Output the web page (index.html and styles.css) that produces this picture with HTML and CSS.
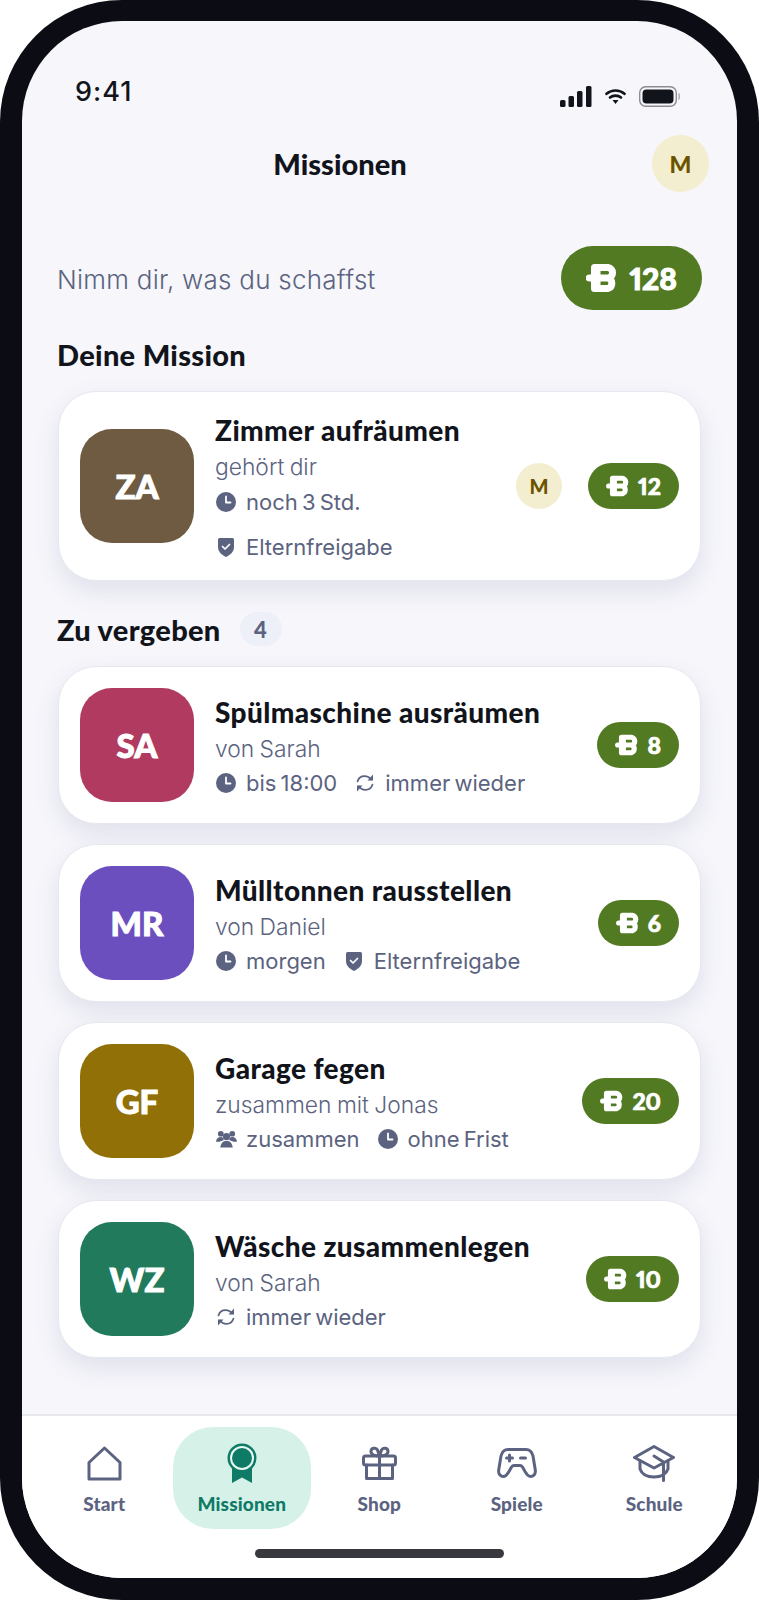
FILE: index.html
```html
<!DOCTYPE html>
<html lang="de">
<head>
    <meta charset="UTF-8">
    <meta name="viewport" content="width=device-width, initial-scale=1.0">
    <title>Missionen</title>
    <link rel="stylesheet" href="styles.css">
</head>
<body>
    <svg class="sprite" xmlns="http://www.w3.org/2000/svg">
        <symbol id="coin" viewBox="0 0 32 30">
            <path d="M8.500 4.500H22a5.300 5.300 0 0 1 0 10.500a5.500 5.500 0 0 1 0 10.500H8.500ZM3.200 15H20M11 4.500V25.500" fill="none" stroke="#fff" stroke-width="7" stroke-linecap="round" stroke-linejoin="round"/>
        </symbol>
        <symbol id="clock" viewBox="0 0 20 20">
            <circle cx="10" cy="10" r="10" fill="#5b6380"/>
            <path d="M10 4.500V10.500H14.500" fill="none" stroke="#fff" stroke-width="1.800" stroke-linecap="round" stroke-linejoin="round"/>
        </symbol>
        <symbol id="shield" viewBox="0 0 20 20">
            <path d="M2 2.500Q2 1 3.500 1H16.500Q18 1 18 2.500V10C18 15 14 18 10 20C6 18 2 15 2 10Z" fill="#5b6380"/>
            <path d="M6.500 9.500L9 12L13.500 7.500" fill="none" stroke="#fff" stroke-width="1.700" stroke-linecap="round" stroke-linejoin="round"/>
        </symbol>
        <symbol id="repeat" viewBox="0 0 20 20">
            <path d="M2.500 8.500C3.500 5 6.500 3.200 9.500 3.200C12 3.200 14.500 4.200 16 6.500M17.500 11.500C16.500 15 13.500 16.800 10.500 16.800C8 16.800 5.500 15.800 4 13.500" fill="none" stroke="#5b6380" stroke-width="1.700" stroke-linecap="round"/>
            <path d="M18 1.500V7.500H12.500ZM2 18.500V12.500H7.500Z" fill="#5b6380"/>
        </symbol>
        <symbol id="people" viewBox="0 0 22 20">
            <circle cx="11" cy="7.500" r="3.800" fill="#5b6380"/>
            <path d="M4.500 19C5 14 7.500 12 11 12S17 14 17.500 19Z" fill="#5b6380"/>
            <circle cx="5" cy="4.500" r="3" fill="#5b6380"/>
            <circle cx="17" cy="4.500" r="3" fill="#5b6380"/>
            <path d="M0 13C.5 9.500 2 8 5 8C6 8 6.800 8.200 7.400 8.600C7.600 9.800 8 10.500 8.500 11C6 11.600 4.800 12.200 4 13ZM22 13C21.500 9.500 20 8 17 8C16 8 15.200 8.200 14.600 8.600C14.400 9.800 14 10.500 13.500 11C16 11.600 17.200 12.200 18 13Z" fill="#5b6380"/>
        </symbol>
    </svg>

    <div class="phone">
        <div class="screen">
            <div class="status-bar">
                <span class="time">9:41</span>
                <div class="status-icons">
                    <svg width="32" height="21" viewBox="0 0 32 21"><g fill="#12141c"><rect x="0" y="14" width="5.500" height="7" rx="1.500"/><rect x="8.500" y="10" width="5.500" height="11" rx="1.500"/><rect x="17" y="5" width="5.500" height="16" rx="1.500"/><rect x="26" y="0" width="5.500" height="21" rx="1.500"/></g></svg>
                    <svg width="21" height="15" viewBox="0 0 21 15"><path d="M1.500 4.800C6.500 .4 14.500 .4 19.500 4.800M5 8.500C8 6 13 6 16 8.500" fill="none" stroke="#12141c" stroke-width="2.600" stroke-linecap="round"/><path d="M7.500 11H13.500L10.500 15Z" fill="#12141c"/></svg>
                    <svg width="41" height="21" viewBox="0 0 41 21"><rect x=".7" y=".7" width="36.600" height="19.600" rx="6" fill="none" stroke="#8b8d94" stroke-width="1.400"/><rect x="3.500" y="3.500" width="31" height="14" rx="4" fill="#12141c"/><path d="M39.500 7.500C40.500 8 40.500 13 39.500 13.500" fill="none" stroke="#a5a7ad" stroke-width="1.400"/></svg>
                </div>
            </div>

            <header class="top-bar">
                <h1>Missionen</h1>
                <div class="avatar-round">M</div>
            </header>

            <div class="intro">
                <p>Nimm dir, was du schaffst</p>
                <div class="points points-large">
                    <svg><use href="#coin"/></svg>
                    <span>128</span>
                </div>
            </div>

            <h2 class="section-title">Deine Mission</h2>
            <div class="card">
                <div class="tile tile-brown">ZA</div>
                <div class="card-body">
                    <h3>Zimmer aufräumen</h3>
                    <p class="card-sub">gehört dir</p>
                    <div class="meta">
                        <span class="meta-item"><svg><use href="#clock"/></svg>noch 3 Std.</span>
                        <span class="meta-item"><svg><use href="#shield"/></svg>Elternfreigabe</span>
                    </div>
                </div>
                <div class="avatar-round avatar-small">M</div>
                <div class="points">
                    <svg><use href="#coin"/></svg>
                    <span>12</span>
                </div>
            </div>

            <h2 class="section-title">Zu vergeben <span class="count">4</span></h2>
            <div class="card-list">
                <div class="card">
                    <div class="tile tile-red">SA</div>
                    <div class="card-body">
                        <h3>Spülmaschine ausräumen</h3>
                        <p class="card-sub">von Sarah</p>
                        <div class="meta">
                            <span class="meta-item"><svg><use href="#clock"/></svg>bis 18:00</span>
                            <span class="meta-item"><svg><use href="#repeat"/></svg>immer wieder</span>
                        </div>
                    </div>
                    <div class="points">
                        <svg><use href="#coin"/></svg>
                        <span>8</span>
                    </div>
                </div>
                <div class="card">
                    <div class="tile tile-purple">MR</div>
                    <div class="card-body">
                        <h3>Mülltonnen rausstellen</h3>
                        <p class="card-sub">von Daniel</p>
                        <div class="meta">
                            <span class="meta-item"><svg><use href="#clock"/></svg>morgen</span>
                            <span class="meta-item"><svg><use href="#shield"/></svg>Elternfreigabe</span>
                        </div>
                    </div>
                    <div class="points">
                        <svg><use href="#coin"/></svg>
                        <span>6</span>
                    </div>
                </div>
                <div class="card">
                    <div class="tile tile-ochre">GF</div>
                    <div class="card-body">
                        <h3>Garage fegen</h3>
                        <p class="card-sub">zusammen mit Jonas</p>
                        <div class="meta">
                            <span class="meta-item"><svg class="icon-wide"><use href="#people"/></svg>zusammen</span>
                            <span class="meta-item"><svg><use href="#clock"/></svg>ohne Frist</span>
                        </div>
                    </div>
                    <div class="points">
                        <svg><use href="#coin"/></svg>
                        <span>20</span>
                    </div>
                </div>
                <div class="card">
                    <div class="tile tile-green">WZ</div>
                    <div class="card-body">
                        <h3>Wäsche zusammenlegen</h3>
                        <p class="card-sub">von Sarah</p>
                        <div class="meta">
                            <span class="meta-item"><svg><use href="#repeat"/></svg>immer wieder</span>
                        </div>
                    </div>
                    <div class="points">
                        <svg><use href="#coin"/></svg>
                        <span>10</span>
                    </div>
                </div>
            </div>

            <nav class="tab-bar">
                <div class="tabs">
                    <a class="tab" href="#">
                        <span class="tab-icon"><svg width="35" height="35" viewBox="0 0 35 35"><path d="M17.500 2L33 16.500V33H2V16.500Z" fill="none" stroke="#5b6380" stroke-width="3" stroke-linejoin="round"/></svg></span>
                        Start
                    </a>
                    <a class="tab tab-active" href="#">
                        <span class="tab-icon"><svg width="30" height="40" viewBox="0 0 30 40"><path d="M5 24V40L15 34.500L25 40V24Z" fill="#0f7a66"/><circle cx="15" cy="15" r="14.500" fill="#0f7a66"/><circle cx="15" cy="15" r="12" fill="#e9f8f3"/><circle cx="15" cy="15" r="10" fill="#0f7a66"/></svg></span>
                        Missionen
                    </a>
                    <a class="tab" href="#">
                        <span class="tab-icon"><svg width="35" height="34" viewBox="0 0 35 34" fill="none" stroke="#5b6380" stroke-width="3" stroke-linecap="round" stroke-linejoin="round"><rect x="1.500" y="10" width="32" height="9" rx="2"/><path d="M4.500 19V32.500H30.500V19M17.500 10V32.500M17.500 10C13 10 9 8.500 9 5.500C9 2 14 1 15.500 4ZM17.500 10C22 10 26 8.500 26 5.500C26 2 21 1 19.500 4Z"/></svg></span>
                        Shop
                    </a>
                    <a class="tab" href="#">
                        <span class="tab-icon"><svg width="40" height="30" viewBox="0 0 40 30" fill="none" stroke="#5b6380" stroke-width="3" stroke-linecap="round" stroke-linejoin="round"><path d="M11 1.500H29C33 1.500 35 4 36 8L38.300 22C39 26.500 36 28.500 33.500 28.500C31 28.500 29.500 26 28 23.500L25.500 19C24.800 18 24 17.500 23 17.500H17C16 17.500 15.200 18 14.500 19L12 23.500C10.500 26 9 28.500 6.500 28.500C4 28.500 1 26.500 1.700 22L4 8C5 4 7 1.500 11 1.500Z"/><path d="M9.500 10H15.500M12.500 7V13M23.500 10H28.500"/></svg></span>
                        Spiele
                    </a>
                    <a class="tab" href="#">
                        <span class="tab-icon"><svg width="42" height="37" viewBox="0 0 42 37" fill="none" stroke="#5b6380" stroke-width="3" stroke-linecap="round" stroke-linejoin="round"><path d="M21 1.500L40.500 12.500L21 23L1.500 12.500Z"/><path d="M7 16V24C9 29.500 15 32 21 32C27 32 33 29.500 35 24V16M21 11L30.500 17V35.500"/></svg></span>
                        Schule
                    </a>
                </div>
                <div class="home-indicator"></div>
            </nav>
        </div>
    </div>
</body>
</html>
```

FILE: styles.css
```css
* {
    margin: 0;
    padding: 0;
    box-sizing: border-box;
}
body {
    font-family: "Inter", "Liberation Sans", sans-serif;
    background-color: #fff;
}
.sprite {
    display: none;
}
.phone {
    width: 759px;
    height: 1600px;
    padding: 21px 22px 22px;
    background-color: #0b0c14;
    border-radius: 122px;
}
.screen {
    display: flex;
    flex-direction: column;
    height: 100%;
    background-color: #f6f6fb;
    border-radius: 100px;
    overflow: hidden;
}
.status-bar {
    display: flex;
    justify-content: space-between;
    padding: 53px 57px 0 53px;
    height: 88px;
}
.time {
    font-size: 27px;
    font-weight: 500;
    line-height: 36px;
    letter-spacing: 1px;
    color: #12141c;
}
.status-icons {
    display: flex;
    align-items: center;
    gap: 13px;
    height: 21px;
    margin-top: 12px;
}
.top-bar {
    display: flex;
    align-items: center;
    gap: 29px;
    margin-top: 26px;
    padding: 0 28px 0 35px;
}
.top-bar h1 {
    flex: 1;
    text-align: center;
    font-family: "Lato", sans-serif;
    font-size: 29px;
    font-weight: 900;
    color: #12141c;
}
.avatar-round {
    display: flex;
    justify-content: center;
    align-items: center;
    flex-shrink: 0;
    width: 57px;
    height: 57px;
    border-radius: 50%;
    background-color: #f3eed0;
    color: #6b5300;
    font-family: "Lato", sans-serif;
    font-size: 23px;
    font-weight: 900;
}
.avatar-small {
    width: 46px;
    height: 46px;
    margin-right: 26px;
    font-size: 20px;
}
.intro {
    display: flex;
    justify-content: space-between;
    align-items: center;
    margin-top: 54px;
    padding: 0 35px;
}
.intro p {
    padding-top: 2px;
    font-size: 26px;
    font-weight: 300;
    letter-spacing: 0.25px;
    color: #5b6380;
}
.points {
    display: flex;
    align-items: center;
    flex-shrink: 0;
    gap: 8px;
    height: 46px;
    padding: 0 18px;
    border-radius: 23px;
    background-color: #527a22;
    color: #fff;
    font-family: "Lato", sans-serif;
    font-size: 23px;
    font-weight: 900;
    font-variant-numeric: proportional-nums;
    -webkit-text-stroke: 0.7px #fff;
}
.points svg {
    width: 24px;
    height: 22px;
}
.points-large {
    gap: 11px;
    height: 64px;
    padding: 0 25px;
    border-radius: 32px;
    font-size: 30px;
    -webkit-text-stroke: 1px #fff;
}
.points-large svg {
    width: 32px;
    height: 30px;
}
.section-title {
    display: flex;
    align-items: center;
    gap: 19px;
    height: 36px;
    margin: 27px 35px 18px;
    padding-bottom: 2px;
    font-family: "Lato", sans-serif;
    font-size: 29px;
    font-weight: 900;
    letter-spacing: 0.3px;
    color: #12141c;
}
.card + .section-title {
    margin-top: 31px;
}
.count {
    display: flex;
    justify-content: center;
    align-items: center;
    width: 42px;
    height: 34px;
    border-radius: 17px;
    background-color: #edf0f8;
    color: #5b6380;
    font-size: 22px;
}
.card-list {
    display: flex;
    flex-direction: column;
    gap: 20px;
}
.card {
    display: flex;
    align-items: center;
    min-height: 158px;
    margin: 0 36px;
    padding: 16px 21px;
    background-color: #fff;
    border: 1px solid #e6e8ef;
    border-radius: 38px;
    box-shadow: 0 10px 24px rgba(90, 100, 140, 0.14);
}
.tile {
    display: flex;
    justify-content: center;
    align-items: center;
    flex-shrink: 0;
    width: 114px;
    height: 114px;
    margin-right: 21px;
    border-radius: 32px;
    color: #fff;
    font-family: "Lato", sans-serif;
    font-size: 33px;
    font-weight: 900;
    -webkit-text-stroke: 1px #fff;
}
.tile-brown { background-color: #6f5b42; }
.tile-red { background-color: #b03a60; }
.tile-purple { background-color: #6b4fbf; }
.tile-ochre { background-color: #927008; }
.tile-green { background-color: #217a5c; }
.card-body {
    flex: 1;
    min-width: 0;
    padding-top: 6px;
}
.card-body h3 {
    padding-bottom: 2px;
    font-family: "Lato", sans-serif;
    font-size: 28px;
    font-weight: 900;
    line-height: 33px;
    letter-spacing: 0.4px;
    color: #12141c;
}
.card-sub {
    font-size: 22.8px;
    font-weight: 300;
    line-height: 35px;
    word-spacing: -1px;
    color: #5b6380;
}
.meta {
    display: flex;
    flex-wrap: wrap;
    gap: 10px 18px;
    padding-left: 1px;
}
.meta-item {
    display: flex;
    align-items: center;
    gap: 10px;
    height: 35px;
    font-size: 22px;
    font-weight: 400;
    word-spacing: -2px;
    color: #5b6380;
}
.meta-item svg {
    width: 20px;
    height: 20px;
}
.meta-item .icon-wide {
    width: 21px;
    margin-right: -1px;
}
.tab-bar {
    margin-top: auto;
    background-color: #fff;
    border-top: 2px solid #e6e8ee;
}
.tabs {
    display: grid;
    grid-template-columns: repeat(5, 137.5px);
    margin-top: 11px;
    padding-left: 13.5px;
}
.tab {
    display: flex;
    flex-direction: column;
    align-items: center;
    height: 102px;
    padding-top: 14px;
    border-radius: 40px;
    color: #5b6380;
    font-family: "Lato", sans-serif;
    font-size: 19px;
    font-weight: 900;
    line-height: 26px;
    letter-spacing: 0.15px;
    text-decoration: none;
}
.tab-icon {
    display: flex;
    justify-content: center;
    align-items: center;
    height: 44px;
    margin-bottom: 6px;
}
.tab-active {
    background-color: #d5f1e8;
    color: #0f7a66;
}
.home-indicator {
    width: 249px;
    height: 9px;
    margin: 20px auto;
    border-radius: 5px;
    background-color: #38393f;
}
```
